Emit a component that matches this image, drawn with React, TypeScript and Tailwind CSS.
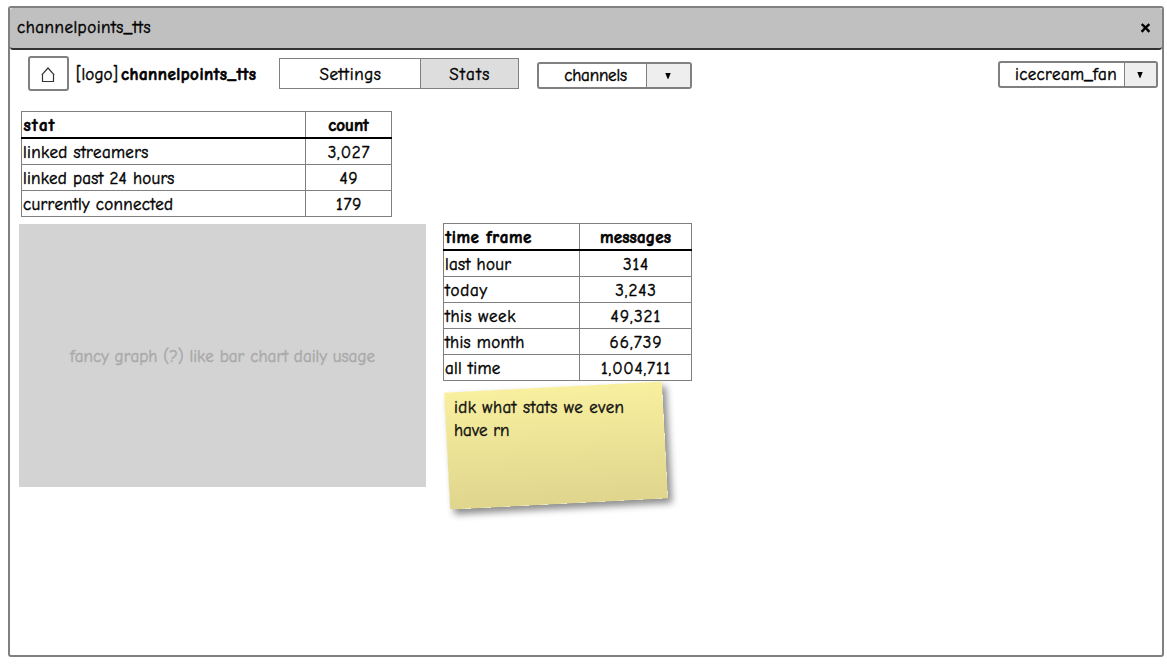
import type { ReactNode } from 'react';

function Caret() {
  return (
    <svg className="-ml-px" width="6" height="6" viewBox="0 0 6 6" aria-hidden="true">
      <path d="M.3 0h5.4L3.3 6h-.6z" fill="#000" />
    </svg>
  );
}

function Combo({ className, arrow, children }: { className: string; arrow: string; children: ReactNode }) {
  return (
    <div className={`flex h-[27px] shrink-0 overflow-hidden rounded-[3px] border-2 border-[#808080] bg-white ${className}`}>
      <div className="flex grow items-center justify-center whitespace-nowrap">{children}</div>
      <button className={`flex shrink-0 items-center justify-center border-l border-[#808080] bg-[#eee] ${arrow}`} aria-label="Open">
        <Caret />
      </button>
    </div>
  );
}

type Row = { label: string; value: string; track: string; valueTrack: string };

function DataTable({ head, rows, first, second }: { head: Row; rows: Row[]; first: string; second: string }) {
  return (
    <div className="flex flex-col border border-[#808080]">
      <div className="-mx-px flex h-[27px] border-b-2 border-black px-px font-bold [-webkit-text-stroke:0.6px_currentColor]">
        <div className={`border-r border-[#808080] pl-[1.5px] leading-[28px] ${first} ${head.track}`}>{head.label}</div>
        <div className={`text-center leading-[28px] ${second} ${head.valueTrack}`}>{head.value}</div>
      </div>
      {rows.map((row) => (
        <div key={row.label} className="flex h-[26px] border-b border-[#808080] last:h-[25px] last:border-b-0">
          <div className={`border-r border-[#808080] pl-px leading-[27px] ${first} ${row.track}`}>{row.label}</div>
          <div className={`pl-px text-center leading-[27px] ${second} ${row.valueTrack}`}>{row.value}</div>
        </div>
      ))}
    </div>
  );
}

const linked: Row[] = [
  { label: 'linked streamers', value: '3,027', track: 'tracking-[0.3px]', valueTrack: 'tracking-[0.8px]' },
  { label: 'linked past 24 hours', value: '49', track: 'tracking-[0.22px]', valueTrack: 'tracking-[0.9px]' },
  { label: 'currently connected', value: '179', track: 'tracking-[0.27px]', valueTrack: 'tracking-[0.8px]' },
];

const messages: Row[] = [
  { label: 'last hour', value: '314', track: 'tracking-[0.3px]', valueTrack: 'tracking-[0.8px]' },
  { label: 'today', value: '3,243', track: 'tracking-[0.7px]', valueTrack: 'tracking-[0.9px]' },
  { label: 'this week', value: '49,321', track: 'tracking-[0.55px]', valueTrack: 'tracking-[1.1px]' },
  { label: 'this month', value: '66,739', track: 'tracking-[0.25px]', valueTrack: 'tracking-[1px]' },
  { label: 'all time', value: '1,004,711', track: 'tracking-[0.3px]', valueTrack: 'tracking-[0.8px]' },
];

export default function App() {
  return (
    <div className="h-[670px] w-[1167px] overflow-hidden bg-white pt-[6px] pl-2 font-['Comic_Sans_MS','Comic_Neue',Lato,sans-serif] text-[17px] leading-[22px] text-black [font-kerning:none] [font-variant-ligatures:none] [-webkit-text-stroke:0.45px_currentColor]">
      <div className="flex h-[651px] w-[1156px] flex-col rounded-[3px] border-2 border-[#808080]">
        <div className="flex h-[42px] shrink-0 items-center justify-between rounded-[3px] border-b-2 border-[#333] bg-[#c0c0c0] pr-[11px] pl-[7px]">
          <span className="tracking-[0.5px]">channelpoints_tts</span>
          <svg className="-mt-px" width="11" height="10" viewBox="0 0 10 9" aria-label="Close">
            <path d="M1.5 1Q4 3 8.5 8M8.5 1Q5 4 1.5 8" fill="none" stroke="#000" strokeWidth="2.2" />
          </svg>
        </div>

        <div className="flex h-[61px] shrink-0 items-start pt-[6px] pl-[18px]">
          <button className="flex h-[35px] w-[41px] shrink-0 items-center justify-center rounded-[3px] border-2 border-[#808080]" aria-label="Home">
            <svg className="mt-[3px] -ml-px" width="14" height="16" viewBox="0 0 14 16" fill="none" stroke="#333" strokeWidth="1.2">
              <path d="M.8 7.8 7 1l6.2 6.8M1.5 7V14.5h11V7" />
            </svg>
          </button>
          <div className="ml-[7px] flex h-[35px] w-[203px] shrink-0 items-center whitespace-pre pt-[2px]">
            <span className="w-[45px] tracking-[0.1px]">[logo]</span>
            <span className="font-bold tracking-[0.48px] [-webkit-text-stroke:0.6px_currentColor]">channelpoints_tts</span>
          </div>
          <div className="mt-[2px] flex h-[31px] w-[240px] shrink-0 border border-[#808080]">
            <div className="w-[141px] border-r border-[#808080] pt-[5px] pl-px text-center tracking-[0.65px]">Settings</div>
            <div className="grow bg-[#ddd] pt-[5px] pl-px text-center tracking-[1.3px]">Stats</div>
          </div>
          <Combo className="mt-[6px] ml-[18px] w-[155px]" arrow="w-[44px]">
            <span className="mt-px ml-[6px] tracking-[-0.2px]">channels</span>
          </Combo>
          <Combo className="mt-[5px] ml-[306px] w-[160px]" arrow="w-[32px]">
            <span className="mt-px ml-[8px] tracking-[0.3px]">icecream_fan</span>
          </Combo>
        </div>

        <div className="ml-[11px] w-[371px] shrink-0">
          <DataTable
            head={{ label: 'stat', value: 'count', track: 'tracking-[1.3px]', valueTrack: 'tracking-normal' }}
            rows={linked}
            first="w-[284px]"
            second="w-[85px]"
          />
        </div>

        <div className="flex items-start pl-[9px]">
          <div className="mt-[7px] flex h-[263px] w-[407px] items-center justify-center bg-[#d3d3d3] pt-[2px] text-[#a9a9a9]">
            <span className="tracking-[0.05px]">fancy graph (?) like bar chart daily usage</span>
          </div>
          <div className="mt-[6px] ml-[17px] w-[249px]">
            <DataTable
              head={{ label: 'time frame', value: 'messages', track: 'tracking-[0.6px]', valueTrack: 'tracking-[0.15px]' }}
              rows={messages}
              first="w-[136px]"
              second="w-[111px]"
            />
            <div className="relative mt-[6px] ml-[4px] h-[117px] w-[218px]">
              <div className="absolute inset-0 rotate-[-3deg] bg-linear-to-b from-[#f8f09f] to-[#dfd58d] shadow-[4px_5px_7px_rgba(0,0,0,0.45)]" />
              <p className="relative w-[205px] pt-[9px] pl-[7px] leading-[23px] tracking-[0.4px] text-[#111]">
                idk what stats we even
                <br />
                <span className="tracking-normal">have rn</span>
              </p>
            </div>
          </div>
        </div>
      </div>
    </div>
  );
}
